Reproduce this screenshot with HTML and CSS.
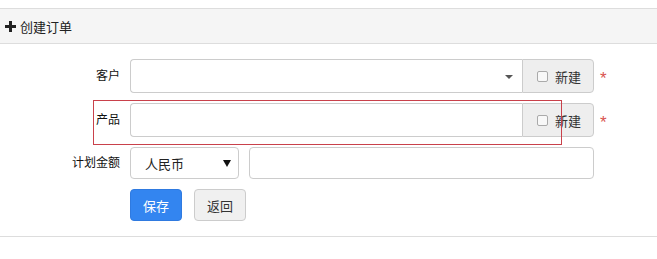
FILE: index.html
```html
<!DOCTYPE html>
<html lang="zh-CN">

<head>
  <meta charset="UTF-8">
  <meta name="viewport" content="width=device-width, initial-scale=1.0">
  <title>创建订单</title>
  <link rel="stylesheet" href="styles.css">
</head>

<body>
  <div class="panel">
    <div class="panel-head">
      <svg class="plus" width="11" height="11" viewBox="0 0 11 11"><path d="M4 0h3v4h4v3H7v4H4V7H0V4h4z" fill="#222"/></svg>
      <span>创建订单</span>
    </div>

    <form class="form">
      <div class="row">
        <label class="label">客户</label>
        <div class="group">
          <div class="select2">
            <span class="caret-sm"></span>
          </div>
          <span class="addon"><i class="check"></i>新建</span>
        </div>
        <span class="req">*</span>
      </div>

      <div class="row">
        <label class="label">产品</label>
        <div class="group">
          <input class="input" type="text">
          <span class="addon"><i class="check"></i>新建</span>
        </div>
        <span class="req">*</span>
        <div class="mark"></div>
      </div>

      <div class="row row-sm">
        <label class="label">计划金额</label>
        <div class="money">
          <div class="currency">人民币<span class="caret"></span></div>
          <input class="input amount" type="text">
        </div>
      </div>

      <div class="row row-sm">
        <span></span>
        <div class="actions">
          <button type="button" class="btn btn-primary">保存</button>
          <button type="button" class="btn">返回</button>
        </div>
      </div>
    </form>
  </div>
</body>

</html>
```

FILE: styles.css
```css
body {
  margin: 0;
  font-family: "Liberation Sans", "Noto Sans CJK SC", sans-serif;
  font-size: 13px;
  color: #333;
  background: #fff;
}

.panel {
  margin-top: 8px;
}

.panel-head {
  height: 34px;
  display: flex;
  align-items: center;
  gap: 4px;
  padding-left: 5px;
  background: #f5f5f5;
  border-top: 1px solid #ddd;
  border-bottom: 1px solid #ddd;
  font-size: 13px;
  color: #222;
}

.form {
  position: relative;
  padding: 15px 0 15px;
  border-bottom: 1px solid #ddd;
}

.row {
  display: grid;
  grid-template-columns: 120px 464px auto;
  column-gap: 10px;
  align-items: center;
  height: 34px;
  margin-bottom: 10px;
}

.row-sm {
  height: 32px;
}

.row:last-child {
  margin-bottom: 0;
}

.label {
  text-align: right;
  font-size: 12px;
  color: #111;
  margin-top: -3px;
}

.group {
  display: flex;
  height: 34px;
}

.select2,
.input {
  flex: 1;
  box-sizing: border-box;
  height: 100%;
  margin: 0;
  border: 1px solid #ccc;
  border-right: none;
  border-radius: 4px 0 0 4px;
  background: #fff;
  outline: none;
  position: relative;
}

.caret-sm {
  position: absolute;
  right: 9px;
  top: 15px;
  border-left: 4px solid transparent;
  border-right: 4px solid transparent;
  border-top: 4px solid #555;
}

.addon {
  width: 72px;
  box-sizing: border-box;
  display: flex;
  align-items: center;
  gap: 7px;
  padding-left: 14px;
  background: #eee;
  border: 1px solid #ccc;
  border-radius: 0 4px 4px 0;
  color: #333;
  font-size: 13px;
}

.check {
  width: 9px;
  height: 9px;
  border: 1px solid #aaa;
  border-radius: 2px;
  background: #f8f8f8;
}

.req {
  color: #d9534f;
  font-size: 17px;
  padding-top: 6px;
  margin-left: -4px;
}

.mark {
  position: absolute;
  left: 93px;
  top: -3px;
  width: 467px;
  height: 43px;
  border: 1px solid #c9414b;
  pointer-events: none;
}

.row:nth-child(2) {
  position: relative;
}

.money {
  display: flex;
  gap: 10px;
  height: 32px;
}

.currency {
  width: 109px;
  box-sizing: border-box;
  display: flex;
  align-items: center;
  justify-content: space-between;
  padding: 0 7px 0 14px;
  border: 1px solid #ccc;
  border-radius: 4px;
  font-size: 13px;
  color: #222;
}

.caret {
  border-left: 4px solid transparent;
  border-right: 4px solid transparent;
  border-top: 7px solid #111;
}

.amount {
  border: 1px solid #ccc;
  border-radius: 4px;
}

.actions {
  display: flex;
  gap: 12px;
  height: 32px;
}

.btn {
  width: 52px;
  height: 32px;
  border: 1px solid #ccc;
  border-radius: 4px;
  background: #f0f0f0;
  color: #333;
  font-family: inherit;
  font-size: 13px;
  padding: 0;
  cursor: pointer;
}

.btn-primary {
  background: #3385f0;
  border-color: #2f7ae0;
  color: #fff;
}
```
